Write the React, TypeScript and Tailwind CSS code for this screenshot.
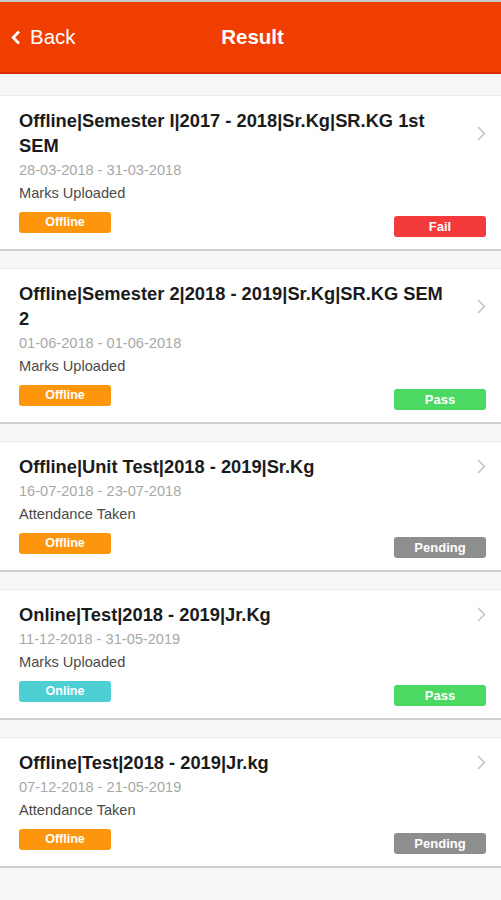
type Item = {
  title: string
  dates: string
  status: string
  mode: 'Offline' | 'Online'
  result: 'Fail' | 'Pass' | 'Pending'
}

const items: Item[] = [
  {
    title: 'Offline|Semester I|2017 - 2018|Sr.Kg|SR.KG 1st SEM',
    dates: '28-03-2018 - 31-03-2018',
    status: 'Marks Uploaded',
    mode: 'Offline',
    result: 'Fail',
  },
  {
    title: 'Offline|Semester 2|2018 - 2019|Sr.Kg|SR.KG SEM 2',
    dates: '01-06-2018 - 01-06-2018',
    status: 'Marks Uploaded',
    mode: 'Offline',
    result: 'Pass',
  },
  {
    title: 'Offline|Unit Test|2018 - 2019|Sr.Kg',
    dates: '16-07-2018 - 23-07-2018',
    status: 'Attendance Taken',
    mode: 'Offline',
    result: 'Pending',
  },
  {
    title: 'Online|Test|2018 - 2019|Jr.Kg',
    dates: '11-12-2018 - 31-05-2019',
    status: 'Marks Uploaded',
    mode: 'Online',
    result: 'Pass',
  },
  {
    title: 'Offline|Test|2018 - 2019|Jr.kg',
    dates: '07-12-2018 - 21-05-2019',
    status: 'Attendance Taken',
    mode: 'Offline',
    result: 'Pending',
  },
]

const modeColor = {
  Offline: 'bg-[#fd960c]',
  Online: 'bg-[#4dcfd3]',
}

const resultColor = {
  Fail: 'bg-[#f43b3b]',
  Pass: 'bg-[#4bd964]',
  Pending: 'bg-[#8e8e8e]',
}

const ResultCard = ({ item }: { item: Item }) => {
  return (
    <div className="border-t border-b-2 border-t-[#ececec] border-b-[#cfcfcf] bg-white pb-[12px] pl-[19px] pr-[15px] pt-[12px]">
      <div className="flex items-center">
        <div className="w-[432px] text-[18.3px] font-bold leading-[25px] text-[#1b1b1b]">{item.title}</div>
        <div className="ml-auto flex w-[10px] justify-end">
          <svg width="9" height="15" viewBox="0 0 9 15" fill="none">
            <polyline points="1,1 7.5,7.5 1,14" stroke="#c6c6c6" strokeWidth="1.6" />
          </svg>
        </div>
      </div>
      <div className="text-[14.6px] leading-[24px] text-[#a8a8a8]">{item.dates}</div>
      <div className="text-[14.6px] leading-[22px] text-[#4a4a4a]">{item.status}</div>
      <div className="mt-2 flex items-start justify-between">
        <div
          className={`flex h-[21px] w-[92px] items-center justify-center rounded-[3px] text-[12.5px] font-bold text-white ${modeColor[item.mode]}`}
        >
          {item.mode}
        </div>
        <div
          className={`mt-[4px] flex h-[21px] w-[92px] items-center justify-center rounded-[3px] text-[13px] font-bold text-white ${resultColor[item.result]}`}
        >
          {item.result}
        </div>
      </div>
    </div>
  )
}

export default function App() {
  return (
    <div className="min-h-[900px] bg-[#f7f7f7] font-['Liberation_Sans',Arial,sans-serif]">
      <div className="border-t-2 border-b-2 border-t-[#c9c9c9] border-b-[#d52b00] bg-[#f03d00]">
        <div className="relative flex h-[70px] items-center">
          <div className="flex items-center pl-[11px] text-white">
            <svg width="10" height="15" viewBox="0 0 10 15" fill="none">
              <polyline points="8,1.5 2.2,7.5 8,13.5" stroke="#fff" strokeWidth="2.8" />
            </svg>
            <span className="ml-[9px] text-[20.5px] leading-none">Back</span>
          </div>
          <div className="pointer-events-none absolute left-0 right-0 pl-[4px] text-center text-[20.5px] font-bold leading-none text-white">
            Result
          </div>
        </div>
      </div>
      <div className="flex flex-col gap-[17px] pt-[21px]">
        {items.map((item) => (
          <ResultCard key={item.title} item={item} />
        ))}
      </div>
    </div>
  )
}
